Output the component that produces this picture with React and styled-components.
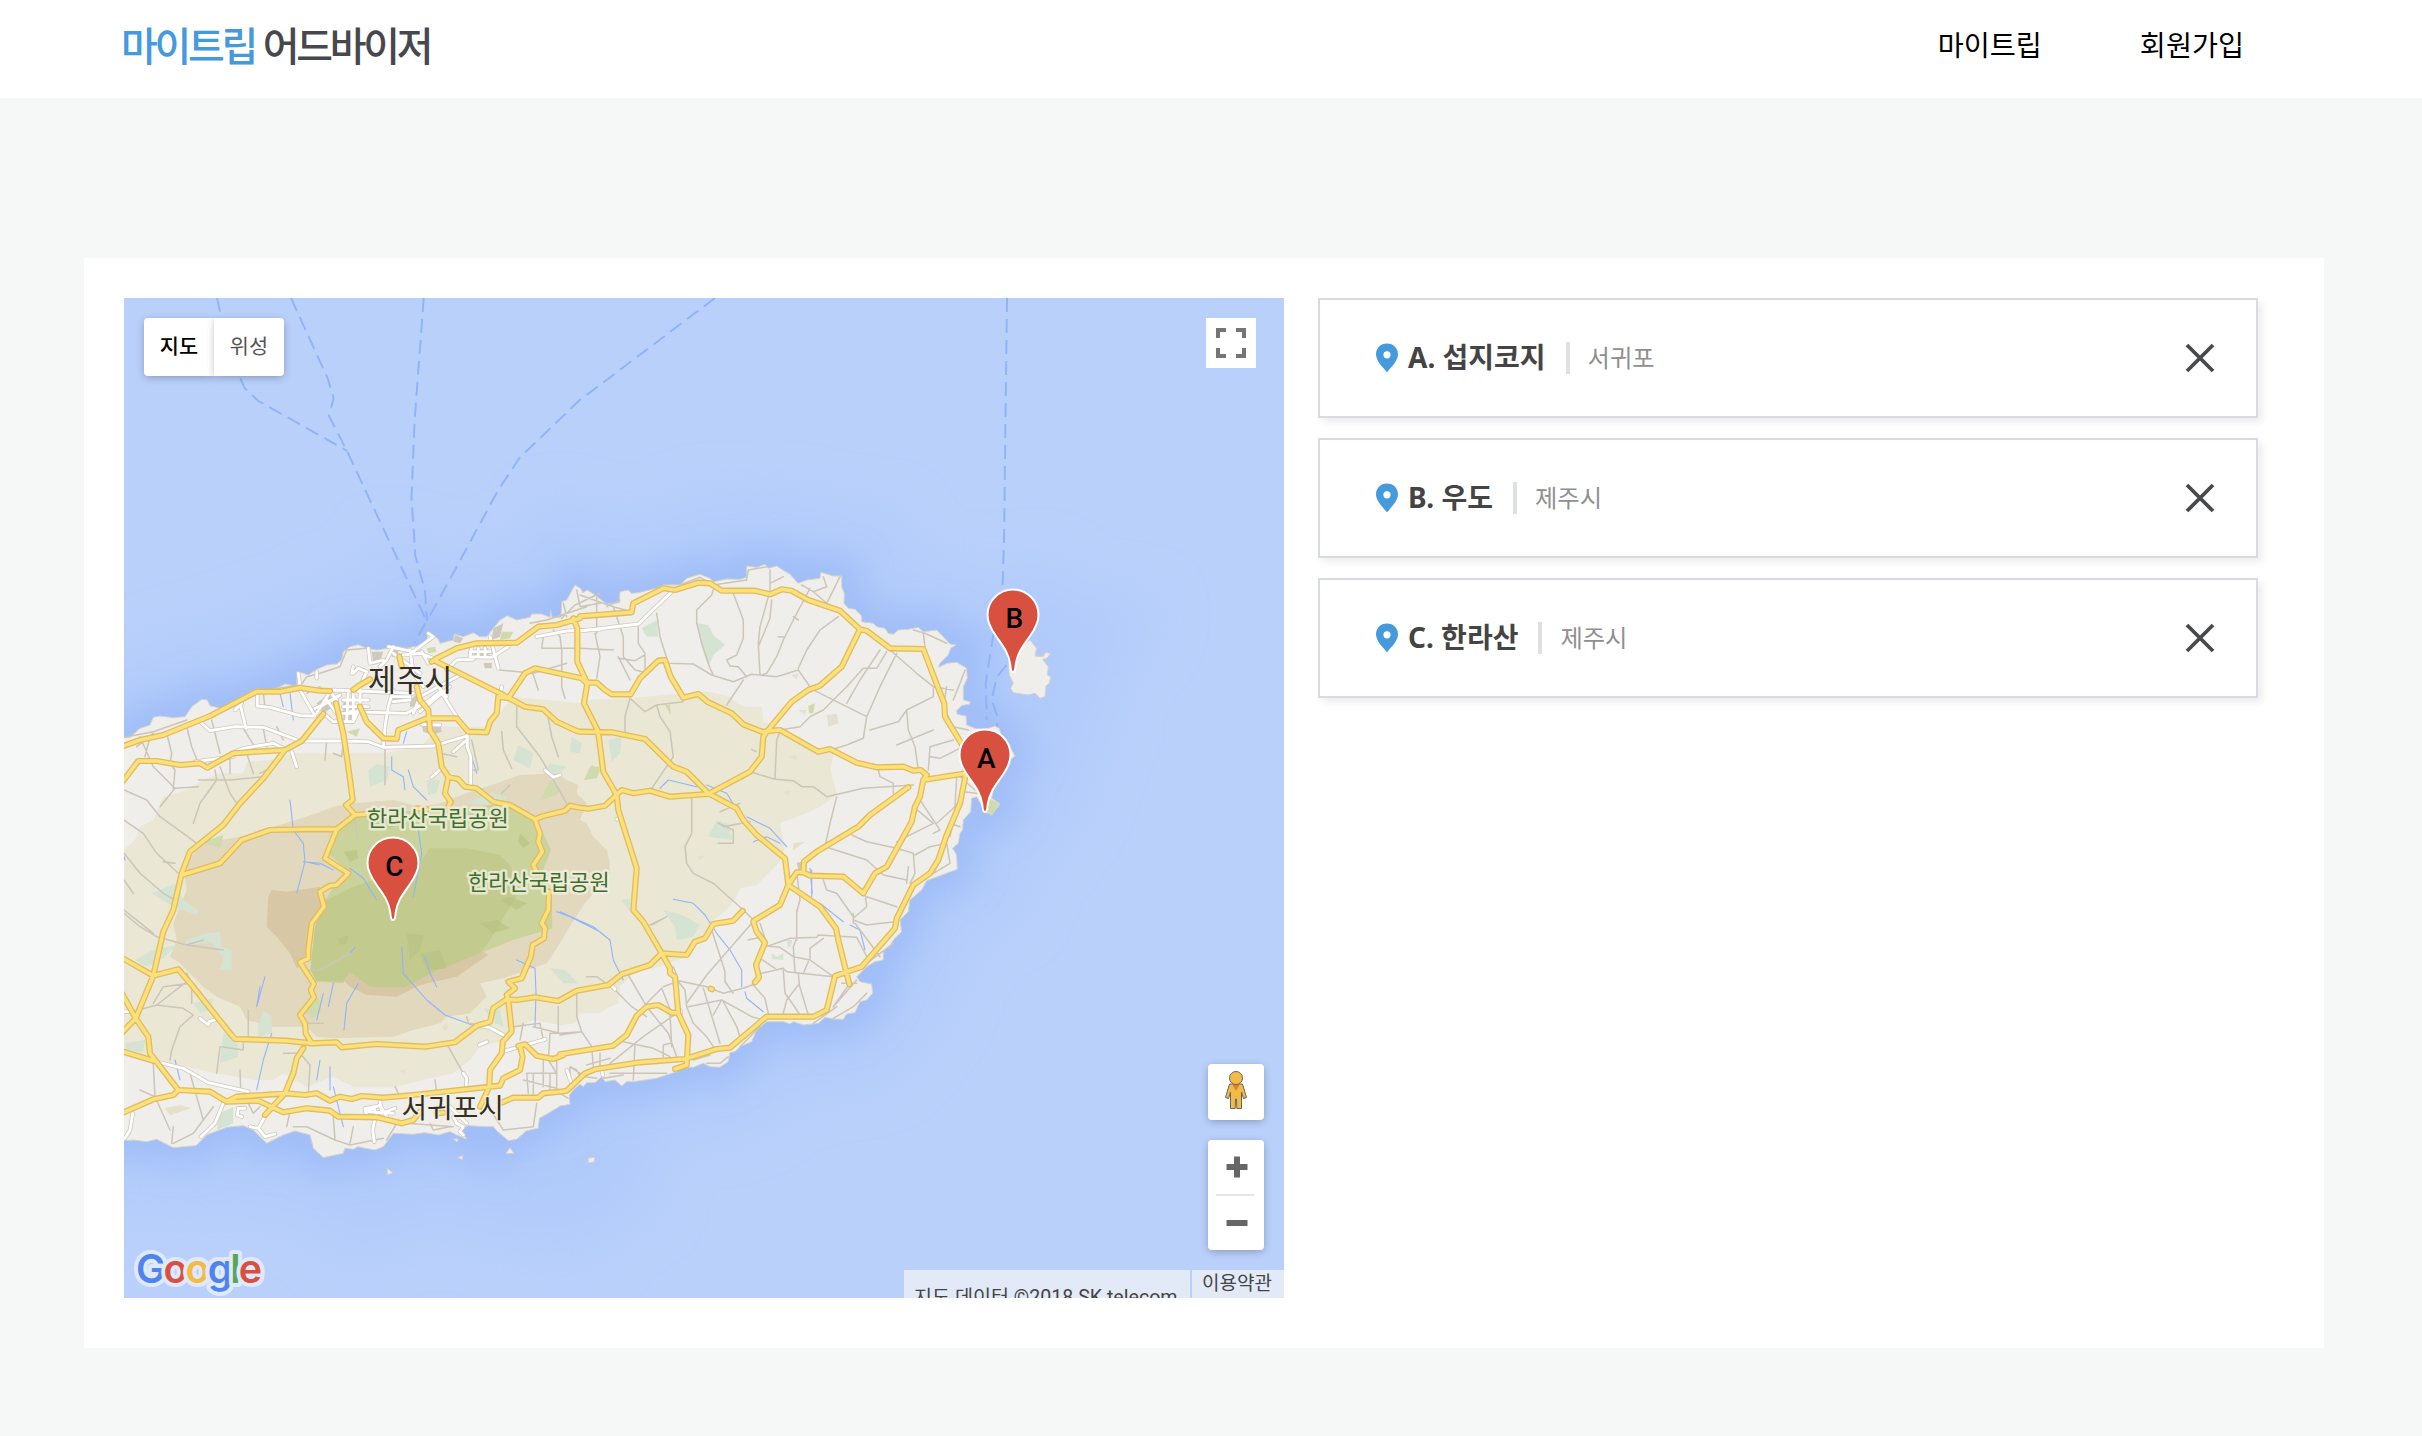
import React from "react";
import styled, { createGlobalStyle } from "styled-components";

const GlobalStyle = createGlobalStyle`
  * { box-sizing: border-box; }
  body {
    margin: 0;
    background: #f6f8f8;
    font-family: "Noto Sans", "Noto Sans CJK KR", sans-serif;
  }
  button { font: inherit; border: 0; padding: 0; background: none; }
`;

/* ---------- page ---------- */

const Page = styled.div`
  min-height: 1436px;
  background: #f6f8f8;
`;

const Header = styled.header`
  height: 98px;
  padding: 0 178px 0 121px;
  background: #fff;
  display: flex;
  justify-content: space-between;
  align-items: flex-start;
`;

const Logo = styled.a`
  margin-top: 18px;
  line-height: 52px;
  font-family: "Noto Sans CJK KR", sans-serif;
  font-weight: 500;
  font-size: 40px;
  letter-spacing: -3.3px;
  word-spacing: 2px;
  color: #46484d;
  white-space: nowrap;
`;

const LogoAccent = styled.span`
  color: #4599dd;
`;

const Nav = styled.nav`
  display: flex;
  gap: 98px;
`;

const NavLink = styled.a`
  margin-top: 24px;
  line-height: 40px;
  font-family: "Noto Sans CJK KR", sans-serif;
  font-size: 28.3px;
  color: #000;
`;

const Panel = styled.main`
  width: 2240px;
  margin: 160px 0 0 84px;
  padding: 40px 66px 50px 40px;
  background: #fff;
  display: flex;
  gap: 34px;
`;

/* ---------- place list ---------- */

const PlaceList = styled.ul`
  flex: 1;
  margin: 0;
  padding: 0;
  list-style: none;
  display: flex;
  flex-direction: column;
  gap: 20px;
`;

const PlaceCard = styled.li`
  height: 120px;
  padding: 0 41px 0 55px;
  border: 2px solid #d8dbe3;
  background: #fff;
  box-shadow: 4px 4px 8px rgba(0, 0, 0, 0.08);
  display: flex;
  align-items: center;
`;

const PlaceName = styled.strong`
  margin: -2px 20px 0 9px;
  font-size: 28px;
  line-height: 40px;
  font-weight: 700;
  color: #444;
`;

const Divider = styled.span`
  width: 4px;
  height: 32px;
  background: #dfe0e2;
`;

const PlaceCity = styled.span`
  margin: -2px 0 0 18px;
  flex: 1;
  font-family: "Noto Sans CJK KR", sans-serif;
  font-size: 24.3px;
  line-height: 36px;
  color: #8f8f8f;
`;

const RemoveButton = styled.button`
  width: 30px;
  height: 30px;
  svg { display: block; }
`;

/* ---------- map ---------- */

const MapPane = styled.section`
  position: relative;
  width: 1160px;
  height: 1000px;
  overflow: hidden;
  background: #b9d0fb;
`;

const MapCanvas = styled.svg`
  display: block;
`;

const MapTypes = styled.div`
  position: absolute;
  left: 20px;
  top: 20px;
  height: 58px;
  display: flex;
`;

const MapType = styled.button`
  width: 70px;
  padding-bottom: 5px;
  background: #fff;
  font-family: "Noto Sans CJK KR", sans-serif;
  font-size: 20.8px;
  font-weight: ${(p) => (p.$active ? 500 : 400)};
  color: ${(p) => (p.$active ? "#000" : "#565656")};
  border-radius: ${(p) => (p.$active ? "4px 0 0 4px" : "0 4px 4px 0")};
  box-shadow: 0 2px 8px -1px rgba(0, 0, 0, 0.3);
`;

const FullscreenButton = styled.button`
  position: absolute;
  left: 1082px;
  top: 20px;
  width: 50px;
  height: 50px;
  background: #fff;
  display: grid;
  place-items: center;
`;

const Controls = styled.div`
  position: absolute;
  left: 1084px;
  top: 766px;
  display: flex;
  flex-direction: column;
  gap: 20px;
`;

const ControlBox = styled.div`
  width: 56px;
  height: ${(p) => p.$height}px;
  border-radius: 4px;
  background: #fff;
  box-shadow: 0 2px 8px -1px rgba(0, 0, 0, 0.3);
  svg { display: block; }
`;

const Credits = styled.div`
  position: absolute;
  right: 0;
  bottom: 0;
  height: 28px;
  display: flex;
  gap: 2px;
  overflow: hidden;
  font-family: Roboto, "Noto Sans CJK KR", sans-serif;
  color: #444;
  white-space: nowrap;
`;

const Credit = styled.span`
  width: ${(p) => p.$width}px;
  padding-left: 10px;
  margin-bottom: -20px;
  background: #e2e9f7;
  line-height: ${(p) => p.$line}px;
  font-size: ${(p) => p.$size}px;
`;

/* Survey points are kept per map tile: tile origin in pixels, points in thirds of a pixel. */
const TILES = {
  nw: [120, 540],
  ne: [580, 540],
  sw: [120, 860],
  se: [560, 860],
};

const place = (tile, points) =>
  points
    .trim()
    .split(/\s+/)
    .map((p) => {
      const [x, y] = p.split(",").map(Number);
      const [ox, oy] = TILES[tile];
      return `${(ox + x / 3).toFixed(1)},${(oy + y / 3).toFixed(1)}`;
    })
    .join(" L");

const lines = (tile, list) =>
  list
    .split(";")
    .filter((s) => s.trim())
    .map((s) => "M" + place(tile, s))
    .join("");

const shapes = (tile, list) =>
  list
    .split(";")
    .filter((s) => s.trim())
    .map((s) => "M" + place(tile, s) + "Z")
    .join("");

const outline = (...parts) => "M" + parts.map(([t, p]) => place(t, p)).join(" L") + "Z";
const route = (...parts) => "M" + parts.map(([t, p]) => place(t, p)).join(" L");

const LAND = outline(
  ["nw", "0,592 30,592 60,565 90,555 100,532 120,528 160,533 195,530 215,500 245,478 262,480 270,497 290,502 310,508 340,490 370,468 410,446 440,455 480,440 495,432 530,438 532,400 545,398 565,405 590,388 620,375 650,372 665,360 670,335 690,320 715,314 740,325 770,330 805,325 810,316 860,325 880,320 905,318 920,300 925,275 940,285 955,298 960,310 1000,300 1003,282 1030,290 1060,278 1080,290 1100,290 1122,262 1140,240 1162,227 1190,240 1230,232 1235,222 1265,222 1290,232 1292,212 1296,232 1323,232 1325,185 1340,180 1365,135 1383,146"],
  ["ne", "8,158 22,150 45,165 80,192 118,188 120,155 145,150 155,160 175,158 230,145 250,135 300,135 320,115 360,103 390,115 400,125 440,117 480,118 500,112 500,78 530,82 555,73 565,85 590,78 605,88 630,103 655,130 680,120 720,115 722,97 760,108 785,108 785,140 793,160 792,190 805,205 825,208 845,228 845,245 880,250 890,260 915,265 925,280 940,283 955,270 985,268 1015,262 1030,275 1070,270 1090,290 1110,312 1128,315 1112,325 1105,345 1080,370 1075,382 1100,370 1130,367 1160,385 1162,415 1150,440 1150,480 1170,485 1170,492 1145,497 1130,512 1132,523 1158,528 1160,555 1185,565 1215,568 1245,558 1258,565 1262,580 1290,620 1305,648 1290,660 1255,700 1240,750 1235,775 1260,792 1235,825 1215,815 1190,770 1175,775 1172,815 1150,840 1148,870 1140,880 1135,910 1118,925 1130,945 1132,988"],
  ["se", "1100,62 1085,90 1050,120 1045,155 1020,180 1025,215 1000,240 990,258 970,275 970,300 945,305 920,320 890,350 900,365 935,372 938,400 920,420 900,425 885,458 860,462 850,478 820,477 795,472 775,490 730,495 700,485 690,492 670,485 620,485 590,510 575,545 540,560 525,575 510,578 505,605 480,622 450,620 430,610 400,622 370,622 350,635 320,645 290,655 220,665 200,665 185,678 165,660 135,665 125,650 105,668 80,668 70,680 60,672 40,690 28,705 30,733 0,738"],
  ["sw", "1310,745 1285,760 1258,775 1255,805 1220,812 1190,838 1165,842 1130,812 1120,800 1100,800 1045,797 1020,805 1040,838 1010,825 990,815 955,825 915,818 880,823 820,820 790,860 765,870 735,865 715,860 700,868 675,865 670,880 610,893 580,865 570,825 525,813 490,825 440,850 400,810 370,797 320,802 260,825 228,857 160,863 110,838 80,845 40,840 0,843"]
);

const ISLETS =
  shapes("ne", "1350,300 1370,325 1365,348 1390,350 1395,338 1412,340 1400,355 1388,358 1405,380 1402,405 1412,410 1408,430 1398,438 1395,470 1380,475 1365,460 1345,465 1300,458 1292,445 1300,430 1288,405 1285,370 1310,330") +
  shapes("sw", "802,925 818,938 803,944; 1013,892 1028,887 1028,899; 1158,880 1170,863 1182,881; 1404,895 1424,891 1423,905 1406,909; 1000,838 1014,836 1012,846");

const LOWLAND = outline(
  ["nw", "0,940 45,900 60,860 100,840 130,770 200,750 250,720 300,700 370,700 380,665 450,660 520,640 640,640 790,640 900,620 960,560 1100,560 1180,470 1280,480 1380,490"],
  ["ne", "20,480 150,475 310,460 390,455 450,470 470,490 500,500 545,500 550,545 590,560 600,575 660,590 700,620 760,640 752,690 765,740 770,765 720,800 680,820 600,850 605,880 615,920 600,965"],
  ["se", "590,75 540,85 530,110 500,150 480,165 450,190 440,215 410,240 380,290 300,320 250,330 210,350 200,360 180,380 175,430 140,445 120,460 60,460 45,490 0,495"],
  ["sw", "1240,480 1210,495 1180,510 1160,540 1080,560 1050,600 1000,640 930,655 830,680 700,680 640,650 560,680 490,640 460,660 400,660 290,640 200,620 120,600 0,570"]
);

const UPLAND = outline(
  ["nw", "245,910 360,890 480,855 590,820 640,800 700,790 820,780 900,800 960,790 1040,760 1130,730 1200,705 1310,700 1340,720 1375,735 1370,760 1400,790"],
  ["ne", "0,840 20,850 40,890 80,930 88,960 90,1000"],
  ["se", "75,130 35,190 0,250"],
  ["sw", "1280,310 1220,330 1150,355 1080,370 1100,410 1050,460 980,470 960,490 880,510 820,530 640,535 590,530 560,500 460,500 380,480 360,440 290,410 250,380 220,350 180,310 150,290 170,240 160,190 180,140 200,90 190,20"]
);

const HIGHLAND = shapes("sw", "455,90 500,95 600,80 620,120 580,190 560,300 530,325 510,280 470,230 440,200 445,110; 670,360 690,325 760,345 850,370 960,320 1080,270 1105,285 1010,350 900,375 830,410 740,405 690,380");

const PARK = outline(
  ["nw", "650,870 700,820 1000,808 1160,790 1240,830 1270,880 1293,930 1265,1000 1295,1060"],
  ["sw", "1297,205 1180,240 1080,280 1000,310 950,335 850,382 750,380 690,335 670,370 590,365 570,330 585,200 610,130 640,80 690,40"],
  ["nw", "625,940"]
);

const PARK_CORE = outline(
  ["nw", "930,925 1040,925 1140,945 1170,975 1180,1010"],
  ["sw", "1195,100 1110,240 1080,280 950,332 855,382 750,380 690,335 670,365 590,362 572,330 585,200 620,120 700,80 850,30"],
  ["nw", "905,960"]
);

const PARK_SHADES =
  shapes("nw", "1200,880 1230,910 1210,925 1195,905; 670,935 710,930 715,955 690,965; 740,845 780,830 850,850 790,870") +
  shapes("sw", "1170,110 1220,130 1190,150 1140,120; 1080,190 1130,180 1170,205 1120,220; 860,220 910,225 900,270 870,300; 900,280 960,270 980,325 920,330; 655,235 685,225 680,250 660,255");

const WETLAND =
  shapes("ne", "350,250 385,255 400,285 435,315 400,345 385,380 365,320; 185,265 230,240 235,290 200,290; 85,600 125,590 120,640 95,665; 410,840 440,850 460,900 385,890") +
  shapes("se", "310,150 365,165 420,195 400,230 350,240 345,200; 185,120 210,115 210,155; 635,280 650,290 670,280 670,300 635,297; 682,240 697,240 692,260 682,260") +
  shapes("nw", "745,690 770,672 810,680 800,720 750,740; 920,720 960,720 950,760 925,765; 1180,660 1195,615 1240,640 1230,685; 1290,670 1340,680 1320,700 1270,700; 1355,590 1385,610 1380,640 1350,635; 95,1060 170,1030 190,1080 235,1110 230,1125 160,1100; 1040,790 1110,760 1160,770 1150,795") +
  shapes("sw", "260,220 300,215 305,260 335,270 335,330 300,330 310,290 270,245 190,260 200,240; 45,300 100,270 170,255 130,295 80,320; 220,430 280,415 270,450 240,460; 415,500 430,450 455,470 455,520 415,530; 310,520 350,530 355,590 300,610; 15,550 75,540 70,575 20,575; 300,760 340,740 340,790 290,810; 1090,445 1140,450 1150,500 1125,490; 1290,325 1335,330 1375,370 1330,370");

const GREENS =
  shapes("nw", "250,905 310,885 300,925; 680,575 720,565 710,590; 920,325 945,320 950,335 925,340; 1145,275 1180,275 1170,295 1140,300; 1290,720 1320,745 1310,765 1262,780; 1415,675 1440,690 1430,715 1393,720") +
  shapes("ne", "685,497 705,490 700,520 687,520; 1222,772 1258,792 1235,825 1215,815; 255,495 270,495 272,525; 30,680 60,680 50,715 12,720") +
  shapes("sw", "555,450 590,410 605,430 600,460 575,475");

const SAND =
  shapes("ne", "740,525 770,522 777,550 745,560; 655,510 680,510 675,525; 625,650 650,645 650,660; 640,910 675,905 640,930; 610,755 635,750 625,768; 350,950 375,945 360,960; 635,405 655,400 650,418") +
  shapes("sw", "135,745 180,735 215,745 150,765; 965,500 980,490 985,505 975,515; 840,632 860,628 850,640");

const BLOCKS =
  shapes("nw", "905,555 960,550 965,575 935,585 910,575; 590,490 630,460 640,500 610,520; 670,475 700,475 695,540 670,540; 755,335 790,335 780,365 760,370; 812,325 835,325 835,350 815,350; 1120,265 1150,250 1140,290 1115,300; 1060,330 1105,325 1105,350 1060,352; 870,480 895,460 905,500 870,500; 1005,285 1030,295 1020,310 1000,305; 1090,370 1115,368 1115,385 1095,385; 820,470 850,470 850,485 820,485") +
  shapes("ne", "650,968 680,962 680,990 655,990");

const STREAMS =
  lines("nw", "815,650 815,690 850,710 855,750; 865,690 880,740 920,780; 895,870 905,940 880,1070; 510,780 520,870 550,910 555,965 530,1060; 480,460 490,500; 510,460 520,540; 830,565 830,590; 860,575 850,610; 690,985 730,1015 770,1080; 555,965 600,975; 1055,650 1070,700; 12,950 15,960") +
  lines("sw", "550,5 600,10 640,30; 420,380 410,440 435,350; 610,400 590,480; 640,370 625,440; 715,370 680,430 672,510; 845,260 850,340 920,420 975,465 1070,500; 915,290 930,340 950,380; 630,620 630,690; 640,680 670,800; 455,520 430,600 410,690; 600,600 590,660; 1190,300 1245,325 1248,400 1245,500; 1310,155 1350,170 1440,215; 690,280 705,262; 165,600 180,660") +
  lines("se", "340,118 400,130 435,165 470,220 510,270 545,330 545,380; 780,130 850,185; 870,195 900,210 915,270; 755,30 755,110; 555,395 560,415 610,455; 0,155 100,200 150,240 160,300 190,360") +
  lines("ne", "380,735 440,760 465,800; 500,830 570,865 620,920; 240,745 265,720 350,740; 520,905 560,890 600,910; 690,985 697,1060");

const LANES =
  lines("nw", "60,590 100,680 165,745 235,740; 90,590 75,650; 140,580 155,640 150,670 165,690 160,745; 200,560 215,620 235,670; 275,540 300,640; 12,750 80,780 120,830 190,880 230,910; 12,840 70,880 110,940 175,1000; 12,940 60,1000 130,1060 165,1080; 12,1110 100,1180; 130,965 165,970; 165,745 120,800; 285,690 290,720 240,790 220,850; 300,680 330,760 350,790; 235,720 330,720 430,710; 330,640 330,700; 370,565 410,630; 430,565 440,620; 470,560 490,600; 380,640 400,700; 12,592 100,575 200,540; 100,580 50,620; 1235,390 1255,450; 1230,250 1280,240 1400,200; 1270,290 1265,325 1370,325; 1300,270 1320,290 1325,330 1325,440 1335,475; 1140,390 1240,400 1340,370; 1330,190 1340,230; 1370,150 1380,200 1440,190; 1145,575 1150,630 1175,685; 1190,500 1190,560 1260,650 1340,790; 1280,510 1295,590 1315,650; 620,600 615,660; 670,605 665,650 640,640; 795,625 795,735; 705,835 712,900; 1325,235 1365,195 1440,160; 540,440 560,410 600,400 660,380 680,330 740,325; 450,450 530,435; 430,460 435,500; 1055,600 1075,690 1055,690; 960,640 1010,650; 1145,760 1170,735; 560,460 600,440; 420,700 460,680 490,640") +
  lines("ne", "0,325 100,330; 50,170 50,280; 45,280 60,350 50,415; 100,200 130,290 130,350 165,390 205,400; 115,350 150,420; 175,260 175,310 195,340 195,400; 115,355 165,362 195,345; 230,220 240,290 265,370 340,372 395,405 460,425 515,403 590,410 655,390; 400,150 395,165 350,210 350,250 365,310 390,385 400,405; 460,160 490,240 490,295 470,345 440,360 450,378 475,380 500,410; 565,170 540,260 535,310 540,405; 575,180 570,235 535,320; 690,145 640,240 610,300 590,350 560,400 545,405; 640,230 655,240; 595,290 615,292; 775,230 720,270 680,330 655,385; 655,390 690,440 710,455 860,530; 490,420 440,495; 150,475 195,515 230,495 310,485; 150,475 135,530 135,575; 230,495 240,530 270,575 280,650; 920,335 890,385 850,385 800,440 760,480 730,510 690,530 660,560 600,570; 950,340 900,440 860,530 850,595 800,615 750,630; 900,330 840,420 800,490; 930,330 1010,400 1060,440 1120,450; 1060,440 1060,470 980,510 955,545 870,570; 980,510 985,570 1005,620 1015,690; 600,575 590,600 585,715; 510,695 585,718 640,722 665,740 700,740 740,770 850,745 1000,735; 1120,600 1050,620 1045,690; 950,615 1060,570; 1050,650 1080,655 1150,620; 770,770 750,850 735,920 860,960 910,1005 980,1020; 815,885 860,905 950,925 1000,940; 335,775 335,880 315,920 320,970 340,1000 400,1030 490,1110 530,1150; 1020,780 1080,870 1060,880; 895,690 900,710 940,730 940,760; 1000,800 1060,850 950,905; 1005,945 1050,920 1100,910; 1000,940 1005,1000 990,1030; 1110,850 1140,860; 1130,710 1125,800 1070,850; 500,118 505,90 560,80; 570,90 570,160; 570,130 610,110; 665,135 700,155 740,140 730,110; 700,155 740,190 780,110; 515,628 528,635; 1000,270 1035,280 1100,310; 1030,280 1035,320; 1100,440 1090,500 1120,560 1165,570; 1155,390 1140,430 1120,480; 1150,755 1190,760; 1140,710 1185,750; 1120,840 1110,890; 1100,910 1110,970 1060,1000; 650,995 660,1080 650,1115 650,1200; 730,1020 740,1050 770,1060 820,1130; 985,980 980,1030; 820,1140 860,1155 945,1145; 855,1060 860,1100 820,1135; 860,1070 950,1100; 215,1155 260,1130; 280,650 215,745; 420,815 480,790; 415,850 460,870 460,910 415,910; 0,165 100,200 155,215; 80,200 120,180; 300,135 360,112 400,135 500,120; 430,860 510,845; 70,690 100,740") +
  lines("se", "575,190 440,345 380,430; 710,150 710,235 700,260 705,335; 565,240 600,232; 625,258 690,235 770,232 775,225 890,232; 620,258 660,262 700,290 750,300 820,350; 750,300 750,265 790,235; 745,305 730,340; 605,340 670,325 680,335 820,350; 670,330 675,400 690,420 720,465; 715,340 718,375 745,465; 715,375 680,420 670,460; 355,362 440,380 490,400 550,385 590,370; 430,385 480,550; 485,420 385,440; 485,420 575,470 610,480; 485,420 460,465; 490,425 530,500 540,530; 355,365 375,390 380,440 400,490 440,530 460,560; 455,210 495,335 495,365 520,400; 580,375 615,415 625,460; 600,295 645,325; 205,345 260,440 325,520 350,590; 305,385 240,450; 305,385 335,460; 310,380 350,365; 330,460 335,560; 350,460 250,530 150,610; 165,390 215,440 260,470; 80,350 110,350 165,390; 50,390 50,470 65,515 95,560 100,620; 65,515 0,525; 190,545 280,565 330,590; 225,550 220,660; 120,580 120,620; 80,615 150,595; 150,640 320,640; 310,590 310,555 330,550; 400,600 450,585; 440,610 480,610 505,590; 820,440 870,370; 760,490 830,440; 890,360 820,440; 890,232 920,290; 960,290 930,250 885,190; 820,475 880,440 920,400; 880,160 880,190; 845,370 890,370; 920,310 1000,250; 600,190 620,250; 1045,20 1040,70; 75,650 110,655; 130,655 190,645; 300,180 270,195; 540,560 600,500; 60,640 30,620 30,660; 0,700 25,715; 350,345 340,320") +
  lines("sw", "12,160 60,200 110,230 200,255 310,270; 200,255 250,240; 12,60 40,100; 100,430 130,380 210,370; 55,450 110,435 190,445 220,465; 110,435 200,365; 200,340 215,370 215,430; 220,465 180,500 155,570 150,600; 100,610 105,710 150,810; 210,640 250,780; 160,800 155,850; 105,710 60,690; 300,560 290,640; 305,560 370,570 370,540; 360,630 362,690; 385,450 385,530; 490,580 540,580 570,615 565,700; 560,490 610,490; 570,330 600,330 690,280; 640,770 645,840 690,855 790,835; 520,800 560,800 645,840; 500,800 510,755; 945,660 950,700; 985,560 1030,640; 825,680 840,710; 1210,490 1200,540; 1315,440 1315,520 1290,520 1285,600 1310,640; 1240,500 1320,520 1385,515; 1180,500 1260,490; 1240,570 1270,600 1270,680; 1270,540 1260,490; 1310,600 1310,700; 1220,640 1310,640; 1210,660 1310,685; 1240,640 1240,710; 1290,640 1290,700; 1220,640 1225,700; 1105,740 1150,810 1240,800 1250,730; 860,790 1000,800; 930,790 940,810 990,800; 800,840 830,790; 385,730 400,760 420,740; 12,830 30,820; 160,850 220,820 280,740; 1350,620 1370,630 1380,650; 1040,470 1045,490 1080,495; 700,800 690,850");

const WHITE_ROADS =
  lines("nw", "240,545 270,572 345,560 430,562 540,603 670,603 745,605 790,622 940,618 1040,588; 412,460 412,498 450,502 540,527 585,528 540,450; 360,490 378,565; 345,510 365,490; 790,622 795,560 805,500 820,450; 690,515 860,520 930,480 960,455; 640,450 760,455 880,460; 345,635 370,625 460,610 490,625; 225,665 340,650; 515,635 530,680; 1042,580 1042,620 1052,650 1052,738; 1250,290 1340,273 1440,268; 960,450 1010,530; 745,325 750,370 790,360; 805,320 880,335 940,290 925,280; 820,320 800,360 780,380; 850,345 900,340 940,355; 870,330 880,400 910,440; 820,340 900,400; 905,335 925,370; 1055,320 1050,350 1115,352 1165,320; 1050,335 1110,335; 590,520 630,455 650,480; 610,520 640,545 700,545 720,500; 600,500 660,465; 585,505 640,480; 620,480 650,520; 700,400 715,385 740,395 720,440 720,500; 695,400 700,380; 670,480 745,480; 670,500 745,500; 665,520 710,520; 685,455 680,540; 700,455 700,540; 1275,690 1300,712 1320,705; 935,712 965,685; 1000,635 1040,600; 1075,325 1075,350; 1095,325 1095,350; 1110,290 1135,385; 980,390 1010,360 1060,358; 880,520 900,470 1020,405; 900,515 990,440; 815,470 870,470; 820,485 870,480; 905,553 960,555; 940,420 980,470; 535,400 540,440; 590,395 590,415; 1145,440 1140,470") +
  lines("ne", "0,273 175,252 275,155; 110,838 118,832") +
  lines("sw", "120,608 190,625 265,668 385,695; 310,730 285,790 243,830; 435,770 415,805 390,800; 415,805 435,830 465,822; 765,775 758,810 763,845; 735,755 780,735 800,770; 740,765 735,745 770,740; 760,740 770,765; 780,725 785,760 825,745; 745,755 820,760; 1030,640 1040,655 1038,690; 1075,497 1110,503 1150,525; 1148,575 1275,538; 1078,555 1100,545; 1340,630 1358,680; 1000,770 1010,790 1030,800 1020,815 1030,825; 990,740 1040,790; 240,475 265,495 268,485 290,478; 38,760 30,810 15,835; 12,455 30,455; 375,745 355,745 352,765 365,770; 900,735 905,760") +
  lines("se", "125,630 128,645; 153,375 165,388; 360,450 362,458");

const HIGHWAYS = [
  route(["nw", "0,622 60,600 130,585 270,528 410,455 480,455 540,443 600,452 630,453"]),
  lines("nw", "0,735 55,663 110,663 180,675 240,670 262,683 340,640 410,635 495,630 545,603 610,522; 185,1005 300,970 365,900 450,870 550,868 650,868 705,825; 648,490 670,580 685,680 698,780 678,795 705,825 740,822; 890,805 920,808; 700,450 720,435 750,418; 720,500 740,545 790,595 830,597 835,570 920,535 1010,535 1045,575 1100,577 1110,545 1130,520 1135,470; 838,350 845,380; 890,440 900,480 925,510 930,570 955,610 965,680 985,710 975,760 992,785 985,800"),
  route(
    ["nw", "935,365 950,355 1010,325 1070,310 1190,308 1255,260 1310,255 1380,235"],
    ["ne", "0,229 155,217 160,190 250,145 285,150 355,128 390,130 425,152 525,152 570,163 605,148 635,152 685,180 780,212 840,268 860,272 930,325 1030,327 1075,445 1093,490 1095,530 1150,620 1158,700 1140,790 1098,890 1075,960 1050,1000 1000,1035"],
    ["se", "1010,175 1005,205 905,320 825,348 800,450 760,470 620,470 510,563 470,567 375,597 240,607 105,628 75,640 20,692 0,695"],
    ["sw", "1270,700 1255,713 1180,713 1145,728"]
  ),
  route(
    ["nw", "950,365 1140,460 1215,500 1270,508 1310,545 1370,573"],
    ["ne", "0,575 95,577 195,597 280,680 320,695 385,760 470,805 490,840 530,885 615,955 625,1035 720,1100"],
    ["se", "828,205 835,240 868,373"]
  ),
  route(
    ["nw", "985,710 1015,718 1035,740 1070,745 1120,785 1170,795 1245,838 1270,828 1335,812 1350,797"],
    ["ne", "0,803 25,806 75,797 125,750 160,760 210,752 270,770 385,762 510,695 545,650 550,590 560,575 635,485 685,450 720,437 785,380 840,268"]
  ),
  route(["nw", "1245,838 1260,880 1255,905 1267,935 1240,975 1250,995"]),
  route(
    ["nw", "1287,1055 1285,1110 1265,1150 1275,1165"],
    ["sw", "1272,235 1238,255 1232,290 1205,355 1165,365 1185,385 1160,405 1165,420 1175,515 1148,545 1145,580 1110,630 1108,680 1080,740"]
  ),
  route(
    ["nw", "650,868 615,955 685,1000 650,1035 630,1037 600,1055 612,1100"],
    ["sw", "575,190 565,270 565,295 540,307 582,372 572,390 582,412 540,465 555,490 557,520 575,550"]
  ),
  route(
    ["nw", "1135,470 1165,475 1215,400 1245,385 1385,415 1400,430"],
    ["ne", "25,428 50,428 75,450 95,463 152,463 180,415 235,362 255,360 272,410 310,473 355,462 385,487 455,520 490,553 545,575 600,570 715,635 750,627 830,668 890,682 970,680 1000,692 1022,690 1040,705 1030,720"]
  ),
  lines("ne", "1158,700 1030,720 1020,770 1005,800 995,845 920,980 885,1000 850,1060 790,1010 690,1007 670,997 650,997 625,1035 600,1095 525,1140; 670,997 672,965 710,935 835,860 870,825 985,742"),
  lines("se", "585,180 580,185 590,215 615,248 588,315 597,352 585,367; 452,386 456,388"),
  route(
    ["nw", "1360,235 1372,265 1372,365 1402,430 1392,490 1435,575"],
    ["ne", "55,580 70,695 110,765 115,810 170,985 160,1110 190,1145"],
    ["se", "305,280 330,325 330,340 345,350 355,460 385,525 380,615 345,627"]
  ),
  route(
    ["se", "548,152 520,182 460,192 435,235 405,245 380,285 305,280 270,315 185,343 145,375 50,392 0,420"],
    ["sw", "1315,423 1245,412 1190,420 1160,418 1120,445 1110,485 1070,497 1005,547 915,560 770,552 665,562 650,547 575,550 500,542 345,537 330,520 215,375 175,328 100,347 0,290"]
  ),
  route(
    ["nw", "495,630 430,715 360,790 310,855 210,935 185,1000 160,1110"],
    ["sw", "130,215 100,347 47,475 85,530 90,580 175,690 270,695 320,725 415,722 490,757 560,745 630,752 655,770 770,772 845,790 880,780 900,755"]
  ),
  lines("sw", "47,475 0,525; 47,475 0,390; 0,572 110,605; 0,762 100,718 160,705 175,690; 320,725 350,710 500,700 555,705 590,700 630,722 660,710 695,717 725,708 790,713 880,705 1140,677 1150,655 1200,630 1208,590 1200,560; 550,565 530,595 520,640 495,700 435,765; 950,760 970,758"),
  route(
    ["sw", "1195,558 1215,553 1250,587 1300,597 1330,585"],
    ["se", "0,583 160,557 200,525 230,467 260,440 295,435 335,458 355,458"]
  ),
].join("");

const FERRIES =
  "M217,298 L221,316 L232,360 L240.6,379 L244.6,388 L258.4,401 L347.4,451" +
  "M291,298 L306,331 L327.6,378 L333.6,398 L329,416 L347,451 L426.5,621 L414.6,643" +
  "M423.7,298 L414.6,421 L411.5,498 L415.4,556 L425,591 L427,621" +
  "M715,298 L578.7,401 L519.4,458 L497.7,491 L456,568 L427,621" +
  "M1007,298 L1004,540 L1002.7,583 L993,637 L985.7,683 L986.7,720" +
  "M1006.7,665 L996.7,677 L991.7,700 L997,715 L997,728";

const MARKERS = [
  { label: "B", x: 1013, y: 672 },
  { label: "A", x: 985, y: 812 },
  { label: "C", x: 393, y: 920 },
];

const LABELS = [
  { text: "제주시", x: 368, y: 691, size: 30.6, color: "#332f24", halo: 0 },
  { text: "한라산국립공원", x: 367, y: 825.5, size: 22, color: "#3f7029", halo: 5 },
  { text: "한라산국립공원", x: 468, y: 889.5, size: 22, color: "#3f7029", halo: 5 },
  { text: "서귀포시", x: 401.5, y: 1118, size: 27.8, color: "#332f24", halo: 3 },
];

const GOOGLE = [
  ["G", "#4f84ee"],
  ["o", "#d9503f"],
  ["o", "#f5bb41"],
  ["g", "#4f84ee"],
  ["l", "#58a55b"],
  ["e", "#d9503f"],
];

const Label = styled.text`
  font-family: "Noto Sans CJK KR", sans-serif;
  paint-order: stroke;
  stroke: rgba(243, 240, 228, 0.75);
  stroke-linejoin: round;
`;

const MarkerLetter = styled.text`
  font-family: Roboto, sans-serif;
  font-weight: 500;
  font-size: 28px;
  text-anchor: middle;
`;

const GoogleMark = styled.text`
  font-family: Inter, sans-serif;
  font-weight: 600;
  font-size: 39.5px;
  paint-order: stroke;
  stroke: #e0e9fb;
  stroke-width: 8px;
  stroke-linejoin: round;
`;

function IslandMap() {
  return (
    <MapCanvas width="1160" height="1000" viewBox="124 298 1160 1000">
      <defs>
        <filter id="shelf" x="-30%" y="-30%" width="160%" height="160%">
          <feGaussianBlur stdDeviation="28" />
        </filter>
        <filter id="shore" x="-30%" y="-30%" width="160%" height="160%">
          <feGaussianBlur stdDeviation="15" />
        </filter>
      </defs>
      <path d={LAND + ISLETS} fill="#b0cafa" stroke="#b0cafa" strokeWidth="110" filter="url(#shelf)" />
      <path d={LAND} fill="#a0bef8" stroke="#a0bef8" strokeWidth="34" filter="url(#shore)" />
      <path d={FERRIES} fill="none" stroke="#90b2f8" strokeWidth="1.9" strokeDasharray="14 7" />
      <path d={LAND + ISLETS} fill="#f0eeea" stroke="#d5d2cc" strokeWidth="1" />
      <path d={LOWLAND} fill="#eae7d4" />
      <path d={UPLAND} fill="#e2d8bd" />
      <path d={HIGHLAND} fill="#d8c7a5" />
      <path d={PARK} fill="#cad39b" />
      <path d={PARK_CORE} fill="#c2ca8d" />
      <path d={PARK_SHADES} fill="#b9c386" opacity="0.7" />
      <path d={WETLAND} fill="#d5e3d3" />
      <path d={GREENS} fill="#cfdbac" />
      <path d={SAND} fill="#e5e0cb" />
      <path d={BLOCKS} fill="#cfc8be" />
      <g fill="none" strokeLinecap="round" strokeLinejoin="round">
        <path d={STREAMS} stroke="#8fb5fb" strokeWidth="1.1" />
        <path d={LANES} stroke="#ccc5b9" strokeWidth="1.5" />
        <path d={WHITE_ROADS} stroke="#d0cabf" strokeWidth="4.4" />
        <path d={WHITE_ROADS} stroke="#fff" strokeWidth="2.8" />
        <path d={HIGHWAYS} stroke="#e0bc5d" strokeWidth="6.2" />
        <path d={HIGHWAYS} stroke="#fbe07b" strokeWidth="3.6" />
      </g>
      {LABELS.map((l, i) => (
        <Label key={i} x={l.x} y={l.y} fontSize={l.size} fill={l.color} strokeWidth={l.halo}>
          {l.text}
        </Label>
      ))}
      {MARKERS.map((m) => (
        <g key={m.label} transform={`translate(${m.x} ${m.y})`}>
          <path
            d="M0,0 C-2.5,0 -2.2,-4 -2.8,-8 C-4.5,-20 -11,-27 -17,-36 C-22,-43 -25.5,-49 -25.5,-57 A25.5,25.5 0 0 1 25.5,-57 C25.5,-49 22,-43 17,-36 C11,-27 4.5,-20 2.8,-8 C2.2,-4 2.5,0 0,0Z"
            fill="#d8503f"
            stroke="#fff"
            strokeWidth="2"
          />
          <MarkerLetter x="1.3" y="-44.5">{m.label}</MarkerLetter>
        </g>
      ))}
      <GoogleMark x="136" y="1283" textLength="126">
        {GOOGLE.map(([ch, fill], i) => (
          <tspan key={i} fill={fill}>{ch}</tspan>
        ))}
      </GoogleMark>
    </MapCanvas>
  );
}

function MapView() {
  return (
    <MapPane>
      <IslandMap />
      <MapTypes>
        <MapType $active>지도</MapType>
        <MapType>위성</MapType>
      </MapTypes>
      <FullscreenButton aria-label="전체화면">
        <svg width="30" height="30" viewBox="0 0 30 30" fill="none" stroke="#757575" strokeWidth="4">
          <path d="M2 10V2H10M20 2H28V10M28 20V28H20M10 28H2V20" />
        </svg>
      </FullscreenButton>
      <Controls>
        <ControlBox $height={56}>
          <svg width="56" height="56" viewBox="0 0 56 56" stroke="#666" strokeWidth="1" strokeLinejoin="round" fill="#f2bb47">
            <path d="M21.5 20 L34.5 20 L38.5 33.5 L35.5 34.5 L33.5 28 L33.5 44.5 L28.8 44.5 L28.5 35 L27.5 35 L27.2 44.5 L22.5 44.5 L22.5 28 L20.5 34.5 L17.5 33.5Z" />
            <path d="M24 20H32L28 27Z" fill="#d98037" stroke="none" />
            <circle cx="28" cy="14" r="6.5" />
          </svg>
        </ControlBox>
        <ControlBox $height={110}>
          <svg width="56" height="110" viewBox="0 0 56 110" fill="none" stroke="#666" strokeWidth="6">
            <path d="M18.5 27H39.5M29 16.5V37.5M18.5 83H39.5" />
            <path d="M8 55H46" stroke="#e6e6e6" strokeWidth="2" />
          </svg>
        </ControlBox>
      </Controls>
      <Credits>
        <Credit $width={286} $line={56} $size={19.6}>지도 데이터 ©2018 SK telecom</Credit>
        <Credit $width={92} $line={27} $size={19}>이용약관</Credit>
      </Credits>
    </MapPane>
  );
}

function PinIcon() {
  return (
    <svg width="24" height="30" viewBox="0 0 24 30">
      <path
        fillRule="evenodd"
        fill="#4599dd"
        d="M12 0.5C5.6 0.5 1 5.2 1 11.3C1 17.5 7 23.5 12 29.3C17 23.5 23 17.5 23 11.3C23 5.2 18.4 0.5 12 0.5ZM12 8.2A3.6 3.6 0 1 1 12 15.4A3.6 3.6 0 1 1 12 8.2Z"
      />
    </svg>
  );
}

const PLACES = [
  { name: "A. 섭지코지", city: "서귀포" },
  { name: "B. 우도", city: "제주시" },
  { name: "C. 한라산", city: "제주시" },
];

export default function App() {
  return (
    <>
      <GlobalStyle />
      <Page>
        <Header>
          <Logo>
            <LogoAccent>마이트립</LogoAccent> 어드바이저
          </Logo>
          <Nav>
            <NavLink>마이트립</NavLink>
            <NavLink>회원가입</NavLink>
          </Nav>
        </Header>
        <Panel>
          <MapView />
          <PlaceList>
            {PLACES.map((p) => (
              <PlaceCard key={p.name}>
                <PinIcon />
                <PlaceName>{p.name}</PlaceName>
                <Divider />
                <PlaceCity>{p.city}</PlaceCity>
                <RemoveButton aria-label="삭제">
                  <svg width="30" height="30" viewBox="0 0 30 30" stroke="#48494c" strokeWidth="3.8">
                    <path d="M2 2L28 28M28 2L2 28" />
                  </svg>
                </RemoveButton>
              </PlaceCard>
            ))}
          </PlaceList>
        </Panel>
      </Page>
    </>
  );
}
